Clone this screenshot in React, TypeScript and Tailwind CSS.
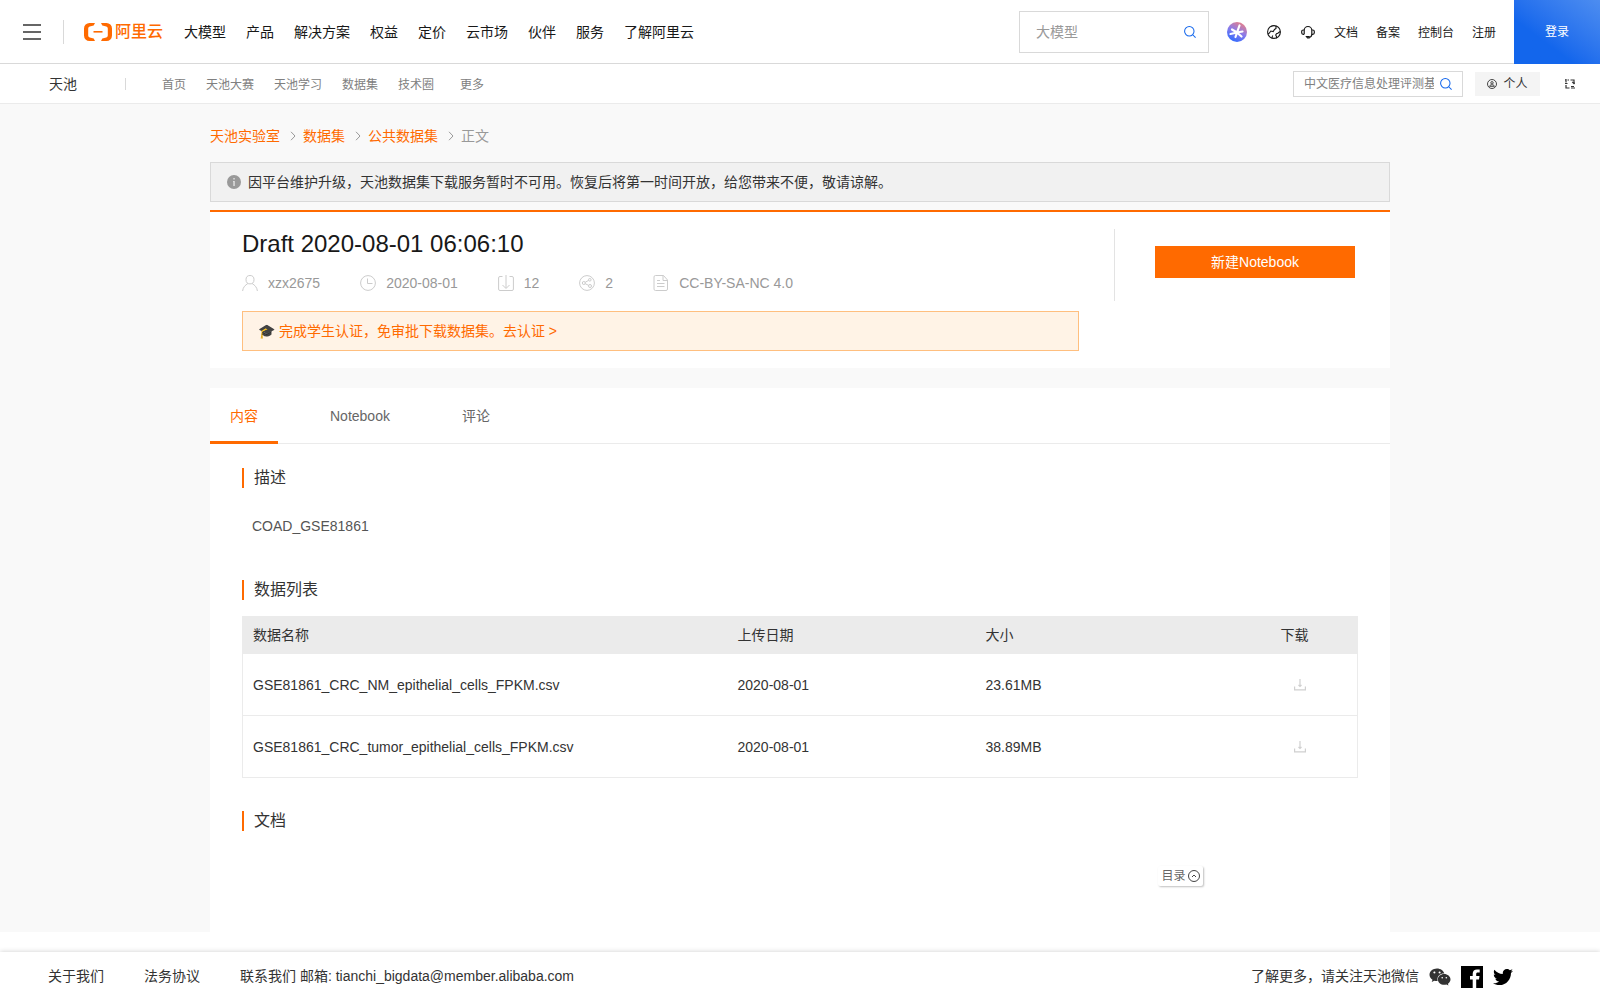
import { FaTwitter, FaWeixin } from "react-icons/fa";

interface DataFile {
  name: string;
  date: string;
  size: string;
}

const mainNav = ["大模型", "产品", "解决方案", "权益", "定价", "云市场", "伙伴", "服务", "了解阿里云"];
const userNav = ["文档", "备案", "控制台", "注册"];
const subNav = ["首页", "天池大赛", "天池学习", "数据集", "技术圈"];
const crumbs = ["天池实验室", "数据集", "公共数据集"];

const files: DataFile[] = [
  { name: "GSE81861_CRC_NM_epithelial_cells_FPKM.csv", date: "2020-08-01", size: "23.61MB" },
  { name: "GSE81861_CRC_tumor_epithelial_cells_FPKM.csv", date: "2020-08-01", size: "38.89MB" },
];

function SearchIcon() {
  return (
    <svg viewBox="0 0 14 14" className="size-3 shrink-0" fill="none" stroke="#1366ec" strokeWidth="1.2">
      <circle cx="6.2" cy="6.2" r="5.5" />
      <path d="M10.200 10.200l3.300 3.300" />
    </svg>
  );
}

function LogoMark() {
  return (
    <svg viewBox="0 0 28 18" className="h-[18px] w-7" fill="#ff6a00">
      <path d="M11 0H5.500A5.500 5.500 0 0 0 0 5.500v7A5.500 5.500 0 0 0 5.500 18H11l-1.300-2.400-4-1.100A2 2 0 0 1 4.200 12.600V5.400a2 2 0 0 1 1.500-1.900l4-1.100z" />
      <path d="M17 0h5.500A5.500 5.500 0 0 1 28 5.500v7a5.500 5.500 0 0 1-5.500 5.500H17l1.300-2.400 4-1.100a2 2 0 0 0 1.500-1.900V5.400a2 2 0 0 0-1.500-1.900l-4-1.100z" />
      <path d="M9.500 8h9v1.600h-9z" />
    </svg>
  );
}

function AssistantIcon() {
  return (
    <svg viewBox="0 0 20 20" className="size-5">
      <defs>
        <linearGradient id="assistant" x1="0.3" y1="1" x2="0.8" y2="0">
          <stop offset="0" stopColor="#2f6bff" />
          <stop offset="0.5" stopColor="#8a7bea" />
          <stop offset="1" stopColor="#f08080" />
        </linearGradient>
      </defs>
      <circle cx="10" cy="10" r="10" fill="url(#assistant)" />
      <g stroke="#fff" strokeWidth="2.2" strokeLinecap="round">
        <path d="M10 10.500L12.500 3.500M10 10.500L5 7.500M10 10.500L3.500 12M10 10.500L8.500 15M10 10.500L14.500 14.500M10 10.500L15.500 9.500" />
      </g>
    </svg>
  );
}

function GlobeIcon() {
  return (
    <svg viewBox="0 0 14 14" className="size-[14px]" fill="none" stroke="#181818" strokeWidth="1.1">
      <circle cx="7" cy="7" r="6.400" />
      <path d="M.8 8.500l1.400-.3L3.800 6l2.400.6L7.500 4.500 9 3.500 9 1M5 13.200c0-1.200.3-2 .8-2.700M13.200 6.500l-2.400 1.800-1.300.4-.8 1.300.8 1.500v1.700" />
    </svg>
  );
}

function HeadsetIcon() {
  return (
    <svg viewBox="0 0 14 14" className="size-[14px]" fill="none" stroke="#181818" strokeWidth="1.2">
      <path d="M3.200 9.300V5.300a3.800 3.800 0 0 1 7.600 0v4M3.200 9.300H2.200A1.500 1.500 0 0 1 .7 7.800V6.500A1.500 1.500 0 0 1 2.200 5h1M10.800 5h1a1.500 1.500 0 0 1 1.500 1.500v1.300a1.500 1.500 0 0 1-1.500 1.500h-1c0 1.500-1 2.900-2.600 3.200" />
      <path d="M5.500 11.500h2.600v1.300H6.500z" />
    </svg>
  );
}

function PersonBadgeIcon() {
  return (
    <svg viewBox="0 0 10 10" className="size-[10px]" fill="none" stroke="#333" strokeWidth="0.9">
      <circle cx="5" cy="5" r="4.500" />
      <circle cx="5" cy="3.800" r="1.200" />
      <path d="M2.500 7.300C3 6 4 5.800 5 5.800s2 .2 2.500 1.500z" />
    </svg>
  );
}

function ScanIcon() {
  return (
    <svg viewBox="0 0 10 10" className="size-[10px]" fill="none" stroke="#333" strokeWidth="1.200">
      <path d="M0 1h1.500M2.500 1H4M1 0v3.500M0 4.500h2.500M1 6v3h3.500M5.500 1H9v2.500M7.200 2.800L9 4.600l1-1M10 9H6M6 7.500h3" />
    </svg>
  );
}

function MetaIcon({ name }: { name: string }) {
  return (
    <svg viewBox="0 0 16 16" className="size-4" fill="none" stroke="#ccc" strokeWidth="1">
      {name === "user" && (
        <>
          <ellipse cx="8" cy="4.700" rx="4" ry="4.200" />
          <path d="M.6 16C1 12 3.500 10 5.800 8.600M15.400 16c-.4-4-2.900-6-5.200-7.400" />
        </>
      )}
      {name === "clock" && (
        <>
          <circle cx="8" cy="8" r="7.400" />
          <path d="M7.500 3.500v5h5" />
        </>
      )}
      {name === "download" && (
        <>
          <path d="M4.500 1.500H2A1.400 1.400 0 0 0 .6 3v11A1.400 1.400 0 0 0 2 15.500h12a1.400 1.400 0 0 0 1.400-1.500V3A1.400 1.400 0 0 0 14 1.500h-2.500" />
          <path d="M8 0v13M4.500 10L8 13.500l3.500-3.500" />
        </>
      )}
      {name === "share" && (
        <>
          <circle cx="8" cy="8" r="7.400" />
          <circle cx="4.800" cy="8" r="1.500" />
          <circle cx="10.800" cy="4.800" r="1.300" />
          <circle cx="11" cy="11" r="1.500" />
          <path d="M6.200 7.300l3.400-1.900M6.200 8.700l3.500 1.700" />
        </>
      )}
      {name === "file" && (
        <>
          <path d="M2.500.5h8L14.500 5v9a1.500 1.500 0 0 1-1.500 1.500H2.500A1.500 1.500 0 0 1 1 14V2A1.500 1.500 0 0 1 2.500.5zM10 .5V5.500h4.500" />
          <path d="M4 5.500h3M4 8.500h7.500M4 11.500h7.500" />
        </>
      )}
    </svg>
  );
}

const meta = [
  { icon: "user", text: "xzx2675" },
  { icon: "clock", text: "2020-08-01" },
  { icon: "download", text: "12" },
  { icon: "share", text: "2" },
  { icon: "file", text: "CC-BY-SA-NC 4.0" },
];

function Header() {
  return (
    <header className="flex h-16 items-stretch bg-white text-[#181818]">
      <div className="flex flex-1 items-center border-b border-[#d9d9d9] pl-[23px]">
        <button aria-label="菜单" className="flex w-[18px] flex-col gap-[5px]">
          <span className="h-[2px] bg-[#666]" />
          <span className="h-[2px] bg-[#666]" />
          <span className="h-[2px] bg-[#666]" />
        </button>
        <span className="ml-[22px] h-6 w-px bg-[#d9d9d9]" />
        <a href="#home" className="ml-5 flex items-center gap-[3px] text-base font-medium text-[#ff6a00]">
          <LogoMark />
          阿里云
        </a>
        <nav className="ml-[21px] flex flex-1 gap-5 text-sm whitespace-nowrap">
          {mainNav.map((item) => (
            <a key={item} href="#nav">{item}</a>
          ))}
        </nav>
        <label className="flex h-[42px] w-[190px] items-center border border-[#d9d9d9] pr-3 pl-4">
          <input
            aria-label="搜索"
            placeholder="大模型"
            className="min-w-0 flex-1 text-sm outline-none placeholder:text-[#999]"
          />
          <SearchIcon />
        </label>
        <div className="ml-[18px] flex items-center gap-5">
          <button aria-label="AI 助理"><AssistantIcon /></button>
          <button aria-label="语言"><GlobeIcon /></button>
          <button aria-label="客服"><HeadsetIcon /></button>
        </div>
        <nav className="mr-[18px] ml-[19px] flex gap-[18px] pt-[2px] text-xs whitespace-nowrap">
          {userNav.map((item) => (
            <a key={item} href="#user">{item}</a>
          ))}
        </nav>
      </div>
      <a
        href="#login"
        className="flex w-[86px] items-center justify-center bg-linear-to-tr from-[#1366ec] from-35% to-[#4d8df0] text-xs text-white"
      >
        登录
      </a>
    </header>
  );
}

function SubHeader() {
  return (
    <div className="flex h-10 items-center border-b border-[#ebebeb] bg-white pr-[25px] pl-[49px] text-xs">
      <a href="#tianchi" className="text-sm text-[#333]">天池</a>
      <span className="ml-12 h-3 w-px bg-[#d9d9d9]" />
      <nav className="ml-9 flex flex-1 gap-5 pt-[2px] text-[#808080]">
        {subNav.map((item) => (
          <a key={item} href="#sub">{item}</a>
        ))}
        <button className="ml-[6px]">更多</button>
      </nav>
      <label className="flex h-[26px] w-[170px] items-center gap-[6px] border border-[#d9d9d9] px-[10px]">
        <input
          aria-label="站内搜索"
          placeholder="中文医疗信息处理评测基准CBLUE"
          className="min-w-0 flex-1 outline-none placeholder:text-[#808080]"
        />
        <SearchIcon />
      </label>
      <button className="ml-3 flex h-6 w-[65px] items-center justify-center gap-[6px] bg-[#f4f4f4] text-[#333]">
        <PersonBadgeIcon />
        个人
      </button>
      <button aria-label="扫码" className="ml-[25px]"><ScanIcon /></button>
    </div>
  );
}

function Breadcrumb() {
  return (
    <nav className="flex h-[58px] items-center pt-[6px] text-sm text-[#ff6a00]">
      {crumbs.map((item) => (
        <span key={item} className="flex items-center">
          <a href="#crumb">{item}</a>
          <svg viewBox="0 0 6 10" className="mr-[7px] ml-[10px] h-[10px] w-[6px]" fill="none" stroke="#999">
            <path d="M1 .8l4 4.200-4 4.200" />
          </svg>
        </span>
      ))}
      <span className="text-[#999]">正文</span>
    </nav>
  );
}

function DatasetHeader() {
  return (
    <section className="mt-2 flex items-start border-t-2 border-[#ff6a00] bg-white pt-[17px] pr-[35px] pb-[17px] pl-8">
      <div className="flex-1">
        <h1 className="text-2xl leading-[30px] text-[#181818]">Draft 2020-08-01 06:06:10</h1>
        <ul className="mt-[14px] flex gap-10 text-sm text-[#999]">
          {meta.map(({ icon, text }) => (
            <li key={icon} className="flex items-center gap-[10px]">
              <MetaIcon name={icon} />
              {text}
            </li>
          ))}
        </ul>
        <div className="mt-[18px] flex h-10 items-center border border-[#ffbf7f] bg-[#fff3e6] px-[15px] text-sm text-[#ff6a00]">
          <a href="#verify">🎓 完成学生认证，免审批下载数据集。去认证 &gt;</a>
        </div>
      </div>
      <div className="ml-[35px] flex h-[72px] w-[241px] justify-end border-l border-[#e3e3e3] pt-[17px]">
        <button className="h-8 w-[200px] bg-[#ff6a00] text-sm text-white">新建Notebook</button>
      </div>
    </section>
  );
}

function SectionTitle({ children }: { children: string }) {
  return <h2 className="border-l-2 border-[#ff6a00] pl-[10px] text-base leading-5 text-[#333]">{children}</h2>;
}

function FileTable() {
  return (
    <table className="mt-4 w-full table-fixed border border-[#ebebeb] text-left text-sm text-[#333]">
      <colgroup>
        <col />
        <col className="w-[248px]" />
        <col className="w-[248px]" />
        <col className="w-[124px]" />
      </colgroup>
      <thead>
        <tr className="h-[37px] bg-[#ebebeb]">
          <th className="pl-[10px] font-normal">数据名称</th>
          <th className="font-normal">上传日期</th>
          <th className="font-normal">大小</th>
          <th className="pl-[47px] font-normal">下载</th>
        </tr>
      </thead>
      <tbody>
        {files.map((file) => (
          <tr key={file.name} className="h-[62px] border-t border-[#ebebeb]">
            <td className="pl-[10px]">{file.name}</td>
            <td>{file.date}</td>
            <td>{file.size}</td>
            <td className="pl-[60px]">
              <button aria-label={`下载 ${file.name}`} className="block">
                <svg viewBox="0 0 12 12" className="size-3" fill="none" stroke="#d0d0d0" strokeWidth="1.2">
                  <path d="M.6 7.500v3.400h10.800V7.500M6 0v7M4.500 6L6 7.500 7.500 6" />
                </svg>
              </button>
            </td>
          </tr>
        ))}
      </tbody>
    </table>
  );
}

function DatasetContent() {
  return (
    <section className="relative mt-5 bg-white pb-[101px]">
      <div role="tablist" className="flex h-14 gap-8 border-b border-[#ebebeb] text-sm text-[#666]">
        <button role="tab" aria-selected className="-mb-px border-b-3 border-[#ff6a00] px-5 pt-[3px] text-[#ff6a00]">
          内容
        </button>
        <button role="tab" className="px-5">Notebook</button>
        <button role="tab" className="px-5">评论</button>
      </div>
      <div className="px-8 pt-6">
        <SectionTitle>描述</SectionTitle>
        <p className="mt-7 mb-11 pl-[10px] text-sm text-[#555]">COAD_GSE81861</p>
        <SectionTitle>数据列表</SectionTitle>
        <FileTable />
        <div className="mt-[33px]">
          <SectionTitle>文档</SectionTitle>
        </div>
      </div>
      <button className="absolute right-[187px] bottom-[46px] flex h-5 w-[45px] items-center justify-center gap-[2px] rounded-[2px] bg-white text-xs text-[#666] shadow-[1px_1px_2px_rgba(0,0,0,0.25)]">
        目录
        <svg viewBox="0 0 12 12" className="size-3" fill="none" stroke="#444">
          <circle cx="6" cy="6" r="5.500" />
          <path d="M4 7l2-2 2 2" />
        </svg>
      </button>
    </section>
  );
}

function Footer() {
  return (
    <footer className="mt-5 flex h-12 items-center bg-white pr-[87px] pl-12 text-sm text-[#333] shadow-[0_0_5px_rgba(0,0,0,0.2)]">
      <div className="flex flex-1 gap-10">
        <a href="#about">关于我们</a>
        <a href="#legal">法务协议</a>
        <span>联系我们 邮箱: tianchi_bigdata@member.alibaba.com</span>
      </div>
      <span>了解更多，请关注天池微信</span>
      <div className="ml-[10px] flex items-center gap-[10px] pt-[2px] text-black">
        <a href="#weixin" aria-label="微信"><FaWeixin className="size-[22px] text-[#333]" /></a>
        <a href="#facebook" aria-label="Facebook">
          <svg viewBox="0 0 22 22" className="size-[22px]">
            <path d="M0 0h22v22H0z" />
            <path d="M11.700 22v-8.500H9V10h2.700V7.700C11.700 4.900 13.400 3.400 16 3.400l2.700.1v3.100h-1.800c-1.400 0-1.700.7-1.700 1.700V10h3.300l-.5 3.500h-2.800V22z" fill="#fff" />
          </svg>
        </a>
        <a href="#twitter" aria-label="Twitter"><FaTwitter className="size-5" /></a>
      </div>
    </footer>
  );
}

export default function App() {
  return (
    <div className="bg-white font-['Liberation_Sans','Noto_Sans_CJK_SC',sans-serif]">
      <Header />
      <SubHeader />
      <main className="bg-[#f9f9f9]">
        <div className="mx-auto w-full max-w-[1180px]">
          <Breadcrumb />
          <div className="flex h-10 items-center gap-[7px] border border-[#d9d9d9] bg-[#f1f1f1] px-4 text-sm text-[#333]">
            <svg viewBox="0 0 14 14" className="size-[14px]">
              <circle cx="7" cy="7" r="7" fill="#999" />
              <path d="M6.300 3h1.500v1.500H6.300zM6 6h1.800v5H6.300V7H6z" fill="#ddd" />
            </svg>
            <p>因平台维护升级，天池数据集下载服务暂时不可用。恢复后将第一时间开放，给您带来不便，敬请谅解。</p>
          </div>
          <DatasetHeader />
          <DatasetContent />
        </div>
      </main>
      <Footer />
    </div>
  );
}
